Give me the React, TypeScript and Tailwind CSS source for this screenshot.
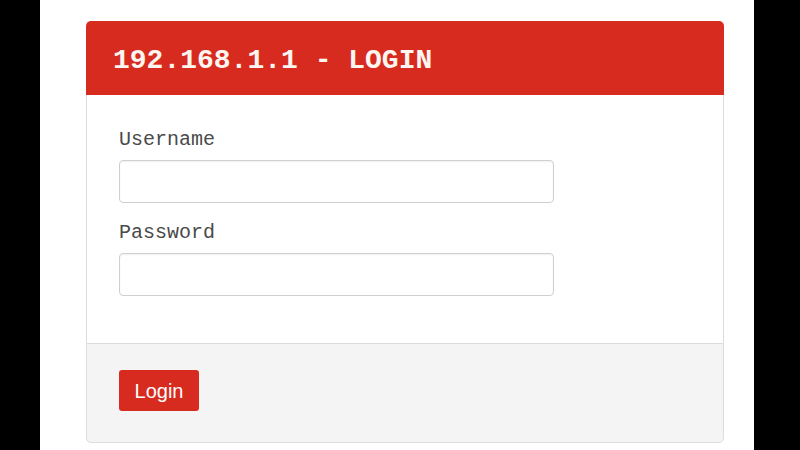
const mono = { fontFamily: '"Liberation Mono", "Courier New", monospace' };

type FieldProps = {
	label: string;
	type: string;
	className?: string;
};

const Field = ({ label, type, className }: FieldProps) => (
	<div className={className}>
		<div
			className="text-[20px] leading-[24px] text-[#4a4a4a] mb-[8px]"
			style={mono}
		>
			{label}
		</div>
		<input
			type={type}
			className="block w-[435px] h-[43px] rounded-[4px] border border-[#cfcfcf] bg-white shadow-[inset_0_1px_2px_rgba(0,0,0,0.06)] outline-none"
		/>
	</div>
);

export default function App() {
	return (
		<div className="flex w-[800px] h-[450px] bg-black overflow-hidden">
			<div className="w-[40px]" />
			<div className="flex-1 bg-white pl-[46px] pr-[30px] pt-[21px]">
				<div className="flex flex-col w-[638px]">
					<div className="h-[74px] flex items-center pl-[27px] pt-[5px] bg-[#d72b20] rounded-t-[5px]">
						<h1
							className="text-[28px] font-bold text-[#fdf6f0]"
							style={mono}
						>
							192.168.1.1 - LOGIN
						</h1>
					</div>
					<div className="h-[248px] border-x border-[#dcdcdc] bg-white pl-[32px] pt-[33px]">
						<Field label="Username" type="text" />
						<Field label="Password" type="password" className="mt-[18px]" />
					</div>
					<div className="h-[100px] border border-[#dcdcdc] rounded-b-[5px] bg-[#f4f4f4] pl-[32px] pt-[26px]">
						<button
							className="w-[80px] h-[41px] rounded-[3px] bg-[#d72b20] text-white text-[20px]"
							style={{ fontFamily: '"Liberation Sans", Arial, sans-serif' }}
						>
							Login
						</button>
					</div>
				</div>
			</div>
			<div className="w-[46px]" />
		</div>
	);
}
